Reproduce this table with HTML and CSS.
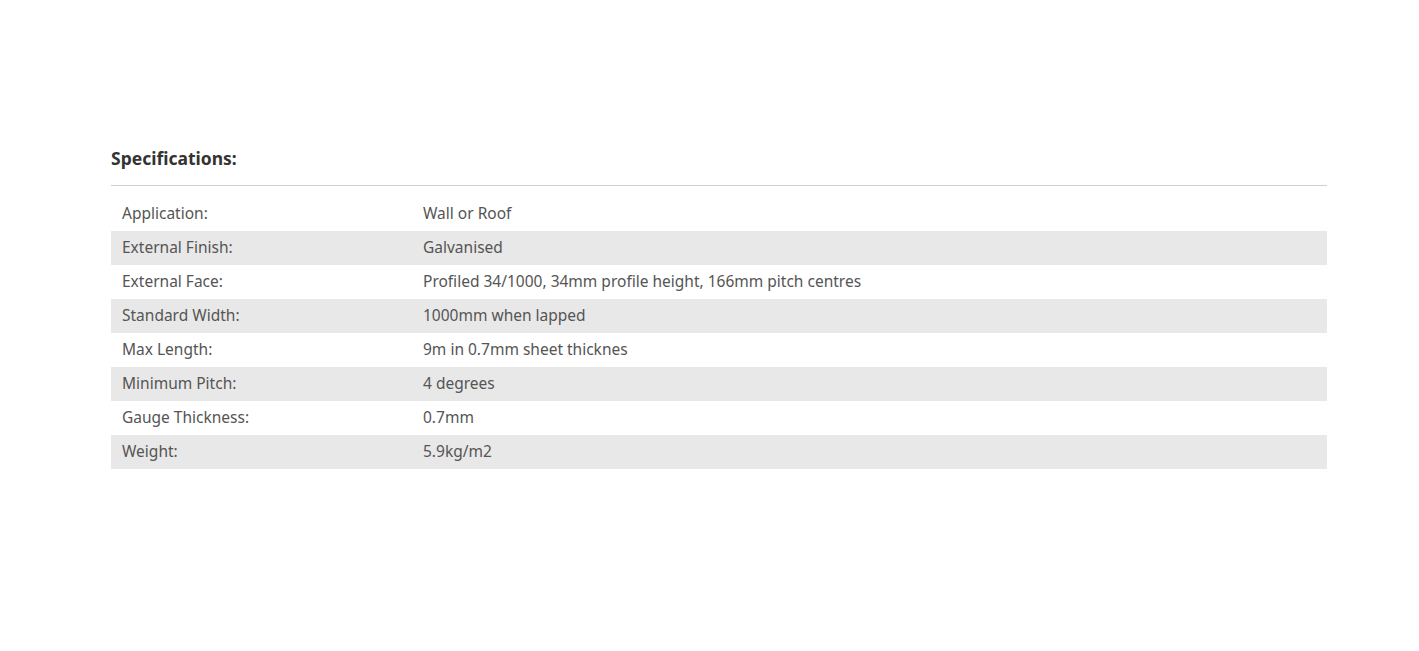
FILE: index.html
```html
<!DOCTYPE html>
<html>
<head>
<meta charset="utf-8">
<link rel="stylesheet" href="styles.css">
</head>
<body>
<section class="specs">
  <h3 class="specs-title">Specifications:</h3>
  <table class="specs-table">
    <tr><td class="k">Application:</td><td>Wall or Roof</td></tr>
    <tr><td class="k">External Finish:</td><td>Galvanised</td></tr>
    <tr><td class="k">External Face:</td><td>Profiled 34/1000, 34mm profile height, 166mm pitch centres</td></tr>
    <tr><td class="k">Standard Width:</td><td>1000mm when lapped</td></tr>
    <tr><td class="k">Max Length:</td><td>9m in 0.7mm sheet thicknes</td></tr>
    <tr><td class="k">Minimum Pitch:</td><td>4 degrees</td></tr>
    <tr><td class="k">Gauge Thickness:</td><td>0.7mm</td></tr>
    <tr><td class="k">Weight:</td><td>5.9kg/m2</td></tr>
  </table>
</section>
</body>
</html>
```
FILE: styles.css
```css
html, body { margin: 0; padding: 0; background: #fff; }
body { font-family: "Noto Sans", sans-serif; color: #555; }
.specs { width: 1216px; margin: 0 0 0 111px; padding-top: 146px; }
.specs-title {
  margin: 0;
  font-size: 17.5px;
  font-weight: 700;
  color: #333;
  line-height: 24px;
  padding-bottom: 15px;
  border-bottom: 1px solid #d0d0d0;
}
.specs-table { width: 100%; border-collapse: collapse; margin-top: 11px; font-size: 15.5px; }
.specs-table td { height: 34px; padding: 0 11px 2px; vertical-align: middle; box-sizing: border-box; }
.specs-table td.k { width: 301px; }
.specs-table tr:nth-child(even) td { background: #e8e8e8; }
```
